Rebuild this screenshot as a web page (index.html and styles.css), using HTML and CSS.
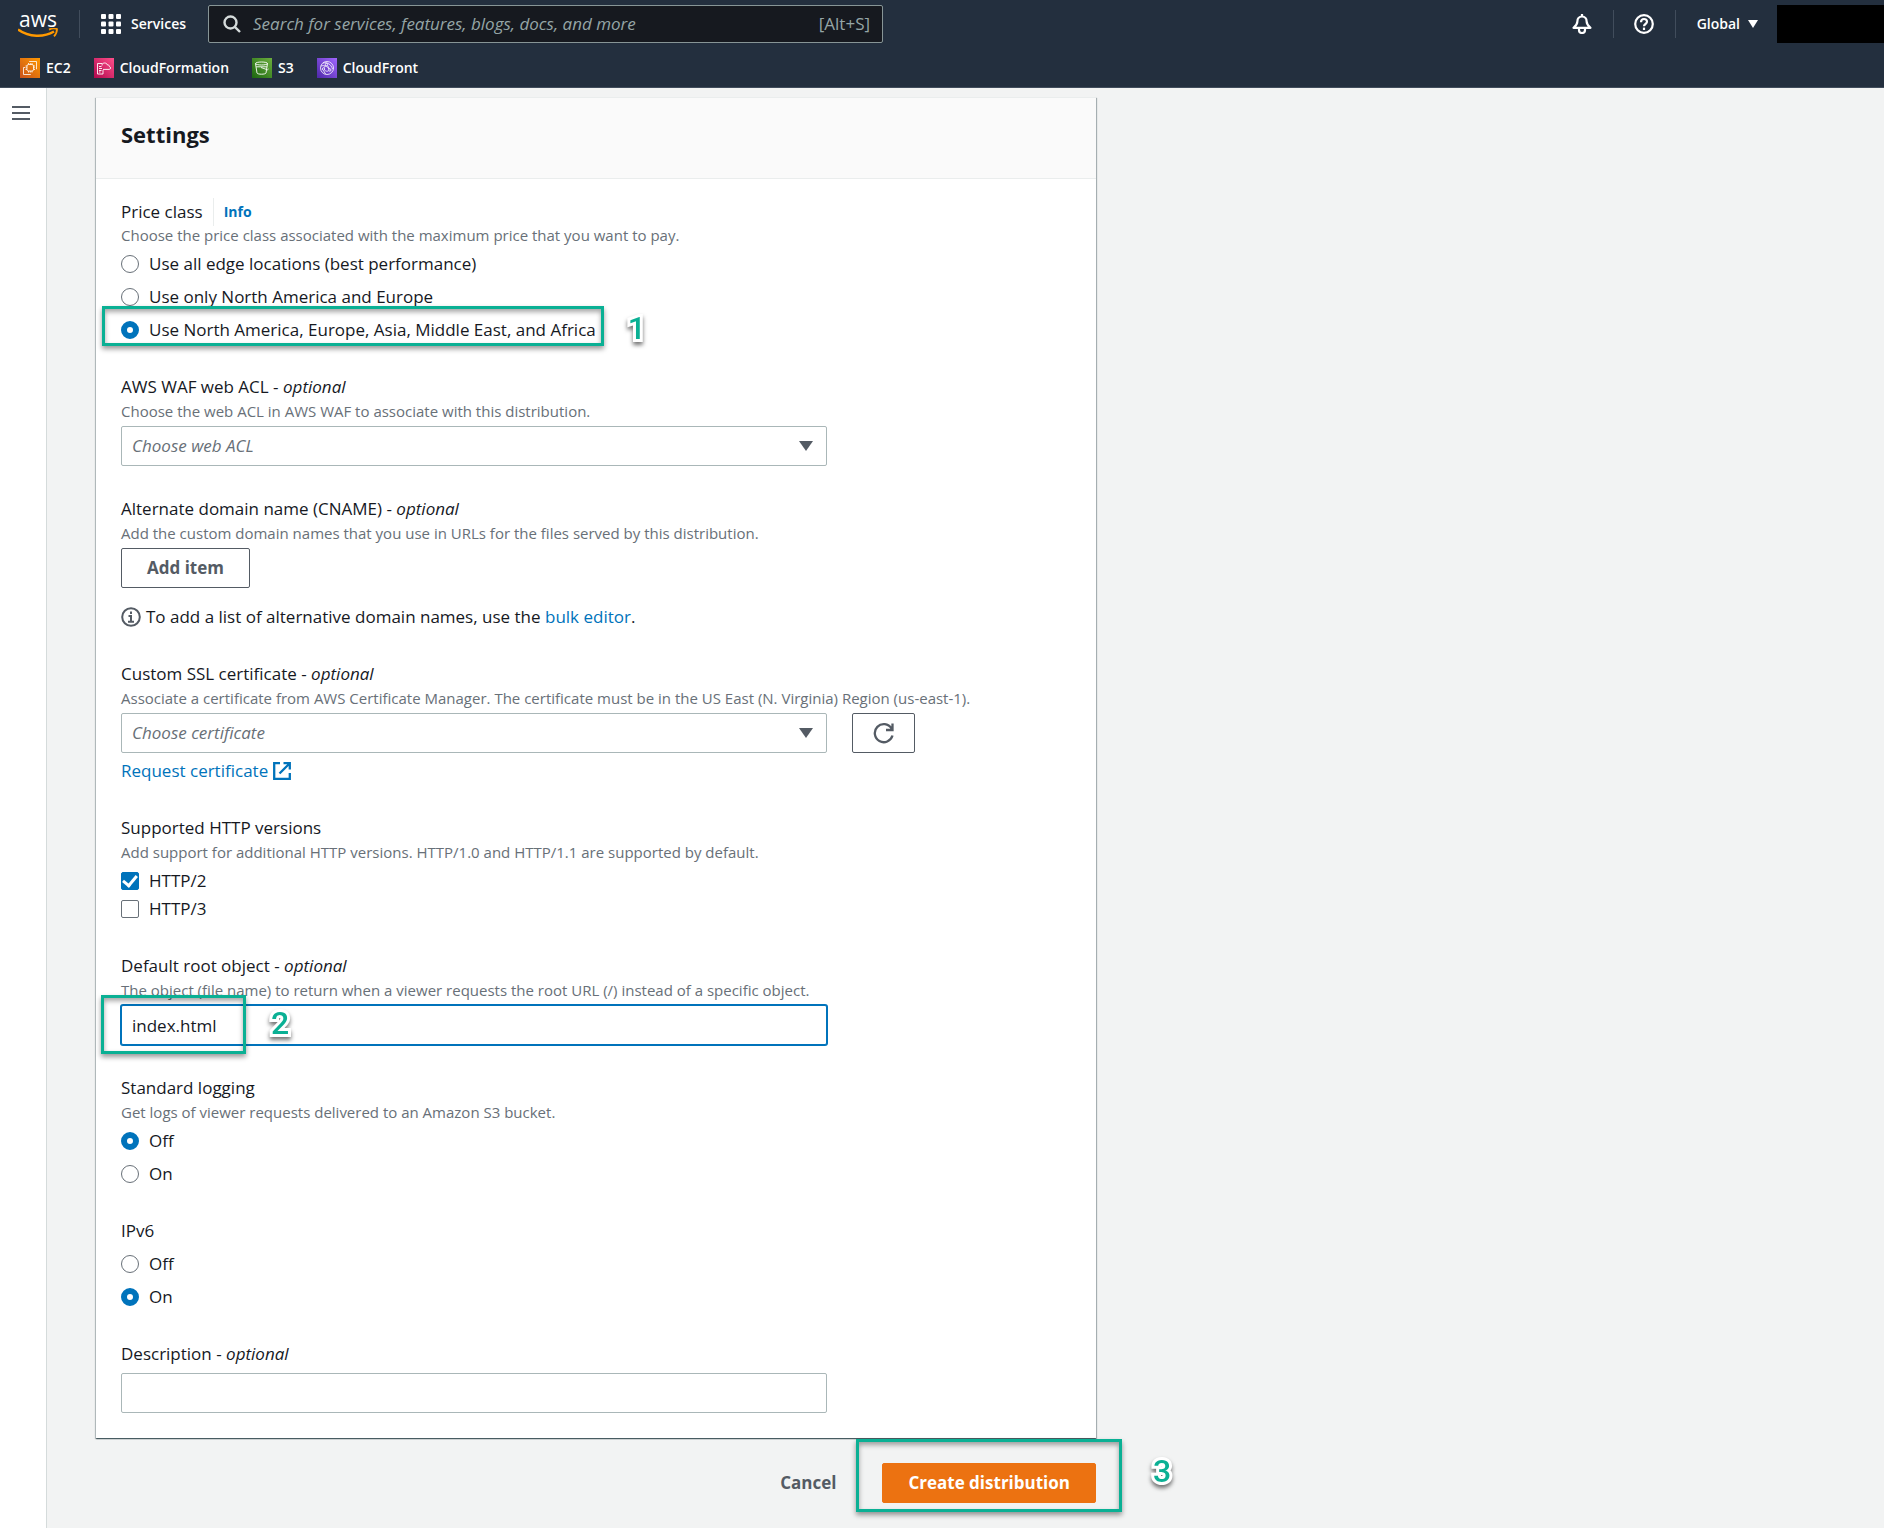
FILE: index.html
```html
<!DOCTYPE html>
<html lang="en">
<head>
<meta charset="utf-8">
<meta name="viewport" content="width=device-width, initial-scale=1">
<title>Create distribution - CloudFront</title>
<link rel="stylesheet" href="styles.css">
</head>
<body>
<header class="topbar">
  <div class="topbar-main">
    <a class="logo" href="#" aria-label="AWS home">
      <span class="logo-text">aws</span>
      <svg width="40" height="10" viewBox="0 0 40 10">
        <path d="M0 1.500C11 9.500 26 9.500 36 3.500" fill="none" stroke="#f90" stroke-width="2.400"/>
        <path d="M31 1.600c3-1.400 6-1.400 8-.6 0 3-1.200 5.500-3 7.400" fill="none" stroke="#f90" stroke-width="1.800"/>
      </svg>
    </a>
    <button class="services" type="button">
      <svg width="20" height="20" viewBox="0 0 20 20" fill="#fff">
        <rect width="5" height="5" rx="1"/><rect x="7.500" width="5" height="5" rx="1"/><rect x="15" width="5" height="5" rx="1"/>
        <rect y="7.500" width="5" height="5" rx="1"/><rect x="7.500" y="7.500" width="5" height="5" rx="1"/><rect x="15" y="7.500" width="5" height="5" rx="1"/>
        <rect y="15" width="5" height="5" rx="1"/><rect x="7.500" y="15" width="5" height="5" rx="1"/><rect x="15" y="15" width="5" height="5" rx="1"/>
      </svg>
      Services
    </button>
    <div class="search">
      <svg width="18" height="18" viewBox="0 0 18 18" fill="none" stroke="#d5dbdb" stroke-width="2.4"><circle cx="7.500" cy="7.500" r="6"/><path d="M11.800 11.800L17 17"/></svg>
      <input type="search" aria-label="Search" placeholder="Search for services, features, blogs, docs, and more">
      <span class="shortcut">[Alt+S]</span>
    </div>
    <div class="tools">
      <button class="tool" type="button" aria-label="Notifications">
        <svg width="20" height="20" viewBox="0 0 20 20" fill="none" stroke="#fff" stroke-width="2.200" stroke-linejoin="round"><path d="M10 0v3M10 2.500c-3 0-4.600 2.300-4.600 4.800 0 2.400-1.200 4.400-3.900 6.500h17c-2.700-2.100-3.900-4.100-3.900-6.500C14.600 4.800 13 2.500 10 2.500z"/><path d="M7 14.500v1.500a3 3 0 0 0 6 0v-1.500"/></svg>
      </button>
      <button class="tool" type="button" aria-label="Help">
        <svg width="20" height="20" viewBox="0 0 20 20" fill="none" stroke="#fff" stroke-width="2.200"><circle cx="10" cy="10" r="8.800"/><path d="M7 8.200C7 4 13 4 13 7.800c0 2.200-3 2.200-3 4.400"/><path d="M10 13.600v2.400"/></svg>
      </button>
      <button class="region" type="button">Global
        <svg width="10" height="8" viewBox="0 0 10 8" fill="#fff"><path d="M0 0h10L5 8z"/></svg>
      </button>
      <div class="account"></div>
    </div>
  </div>
  <nav class="favorites" aria-label="Favorites">
    <a href="#"><svg width="20" height="20" viewBox="0 0 20 20"><defs><linearGradient id="g-ec2" x1="0" y1="1" x2="1" y2="0"><stop stop-color="#c8511b"/><stop offset="1" stop-color="#f90"/></linearGradient></defs><rect width="20" height="20" fill="url(#g-ec2)"/><g fill="none" stroke="#fff" stroke-width=".8"><rect x="7" y="6.500" width="6.500" height="6.500" rx="1.500"/><path d="M8.500 5v1.500M10.300 5v1.500M12 5v1.500M8.500 13v1.500M10.300 13v1.500M12 13v1.500M5.500 8H7M5.500 9.800H7M5.500 11.500H7M13.500 8H15M13.500 9.800H15M13.500 11.500H15M9.500 4V3.500h7V11H16M5 9.500H3.500v7h7V16"/></g></svg>EC2</a>
    <a href="#"><svg width="20" height="20" viewBox="0 0 20 20"><defs><linearGradient id="g-cfn" x1="0" y1="1" x2="1" y2="0"><stop stop-color="#b0084d"/><stop offset="1" stop-color="#ff4f8b"/></linearGradient></defs><rect width="20" height="20" fill="url(#g-cfn)"/><g fill="none" stroke="#fff" stroke-width=".9"><path d="M8.500 5.500h-5v10.500h5.500v-4M5 8.500h2.500M5 10.500h3M5 12.500h2.500M5 14h1.500M8 7.500c0-3 4.500-3.500 5.500-.5 1.200-.2 1.800.4 1.800 1.400 1.800.6 1.500 2.800 0 3H9"/></g></svg>CloudFormation</a>
    <a href="#"><svg width="20" height="20" viewBox="0 0 20 20"><defs><linearGradient id="g-s3" x1="0" y1="1" x2="1" y2="0"><stop stop-color="#1b660f"/><stop offset="1" stop-color="#6cae3e"/></linearGradient></defs><rect width="20" height="20" fill="url(#g-s3)"/><g fill="none" stroke="#fff" stroke-width=".9"><ellipse cx="9.500" cy="5.500" rx="6" ry="1.500"/><path d="M3.500 5.500L5 15c.5 1.600 8.500 1.600 9 0l1.500-9.500M4.200 8.800h10.600M9 9.500l6.500 2.300 1-.8"/></g></svg>S3</a>
    <a href="#"><svg width="20" height="20" viewBox="0 0 20 20"><defs><linearGradient id="g-cf" x1="0" y1="1" x2="1" y2="0"><stop stop-color="#4d27a8"/><stop offset="1" stop-color="#a166ff"/></linearGradient></defs><rect width="20" height="20" fill="url(#g-cf)"/><g fill="none" stroke="#fff" stroke-width=".8"><circle cx="10" cy="10" r="6.500"/><circle cx="9.500" cy="6.500" r="1.200"/><circle cx="6.500" cy="11" r="1.200"/><circle cx="12.800" cy="12" r="1.200"/><path d="M6 5c4-1 8 1 9.500 6M8.600 7.500L7 9.800M7.500 12c1.500 1.500 3 1.500 4 .8M10.500 7.500l1.800 3.300M6.500 12.500L8.500 16M4 8c3-1 6 0 8 3"/></g></svg>CloudFront</a>
  </nav>
</header>

<div class="shell">
  <aside class="rail">
    <button class="menu" type="button" aria-label="Open navigation"><span></span><span></span><span></span></button>
  </aside>
  <main class="content">
    <form>
      <section class="card">
        <div class="card-head"><h2>Settings</h2></div>
        <div class="card-body">

          <div class="field" role="radiogroup" aria-labelledby="price-label">
            <div class="label-row"><span class="label" id="price-label">Price class</span><a class="info" href="#">Info</a></div>
            <p class="hint">Choose the price class associated with the maximum price that you want to pay.</p>
            <div class="options">
              <label class="option"><input type="radio" name="price">Use all edge locations (best performance)</label>
              <label class="option"><input type="radio" name="price">Use only North America and Europe</label>
              <div class="marked marked-option">
                <label class="option"><input type="radio" name="price" checked>Use North America, Europe, Asia, Middle East, and Africa</label>
                <span class="frame"></span><span class="step">1</span>
              </div>
            </div>
          </div>

          <div class="field">
            <label class="label" for="acl">AWS WAF web ACL - <i>optional</i></label>
            <p class="hint">Choose the web ACL in AWS WAF to associate with this distribution.</p>
            <div class="select"><select id="acl"><option>Choose web ACL</option></select></div>
          </div>

          <div class="field">
            <span class="label">Alternate domain name (CNAME) - <i>optional</i></span>
            <p class="hint">Add the custom domain names that you use in URLs for the files served by this distribution.</p>
            <button class="btn" type="button">Add item</button>
            <p class="note">
              <svg width="20" height="20" viewBox="0 0 20 20" fill="none" stroke="#545b64" stroke-width="2"><circle cx="10" cy="10" r="8.800"/><path d="M10 4.500v2.500M7.500 9H10v5.500M7 14.700h6"/></svg>
              <span>To add a list of alternative domain names, use the <a href="#">bulk editor</a>.</span>
            </p>
          </div>

          <div class="field">
            <label class="label" for="cert">Custom SSL certificate - <i>optional</i></label>
            <p class="hint">Associate a certificate from AWS Certificate Manager. The certificate must be in the US East (N. Virginia) Region (us-east-1).</p>
            <div class="control-row">
              <div class="select"><select id="cert"><option>Choose certificate</option></select></div>
              <button class="btn btn-icon" type="button" aria-label="Refresh certificates">
                <svg width="22" height="22" viewBox="0 0 22 22" fill="none" stroke="#545b64" stroke-width="2.300"><path d="M19.500 13.500A9 9 0 1 1 18.500 6.500M19.500 1.500v6.500H13"/></svg>
              </button>
            </div>
            <a class="external" href="#">Request certificate
              <svg width="18" height="18" viewBox="0 0 18 18" fill="none" stroke="#0073bb" stroke-width="2.300"><path d="M7 1.200H1.200v15.600h15.600V11M10.500 1.200h6.300v6.300M16.500 1.500L6.500 11.500"/></svg>
            </a>
          </div>

          <div class="field" role="group" aria-labelledby="http-label">
            <span class="label" id="http-label">Supported HTTP versions</span>
            <p class="hint">Add support for additional HTTP versions. HTTP/1.0 and HTTP/1.1 are supported by default.</p>
            <div class="checks">
              <label class="option"><input type="checkbox" checked>HTTP/2</label>
              <label class="option"><input type="checkbox">HTTP/3</label>
            </div>
          </div>

          <div class="field">
            <label class="label" for="root">Default root object - <i>optional</i></label>
            <p class="hint">The object (file name) to return when a viewer requests the root URL (/) instead of a specific object.</p>
            <div class="marked marked-input">
              <input class="text active" id="root" type="text" value="index.html">
              <span class="frame"></span><span class="step">2</span>
            </div>
          </div>

          <div class="field" role="radiogroup" aria-labelledby="log-label">
            <span class="label" id="log-label">Standard logging</span>
            <p class="hint">Get logs of viewer requests delivered to an Amazon S3 bucket.</p>
            <div class="options">
              <label class="option"><input type="radio" name="log" checked>Off</label>
              <label class="option"><input type="radio" name="log">On</label>
            </div>
          </div>

          <div class="field" role="radiogroup" aria-labelledby="ipv6-label">
            <span class="label" id="ipv6-label">IPv6</span>
            <div class="options">
              <label class="option"><input type="radio" name="ipv6">Off</label>
              <label class="option"><input type="radio" name="ipv6" checked>On</label>
            </div>
          </div>

          <div class="field">
            <label class="label" for="desc">Description - <i>optional</i></label>
            <input class="text" id="desc" type="text">
          </div>
        </div>
      </section>
      <div class="actions">
        <button class="btn btn-link" type="button">Cancel</button>
        <div class="marked marked-submit">
          <button class="btn btn-primary" type="button">Create distribution</button>
          <span class="frame"></span><span class="step">3</span>
        </div>
      </div>
    </form>
  </main>
</div>
</body>
</html>
```

FILE: styles.css
```css
* { box-sizing: border-box; }

body {
  margin: 0;
  min-height: 100vh;
  display: flex;
  flex-direction: column;
  background: #f2f3f3;
  color: #16191f;
  font-family: "Open Sans", "Noto Sans", sans-serif;
  font-size: 17px;
  line-height: 28px;
}

button, input, select { font: inherit; color: inherit; }
button { cursor: pointer; }
a { color: #0073bb; text-decoration: none; }
p, h2 { margin: 0; }
svg { display: block; flex: none; }

/* Top bar */
.topbar {
  background: #232f3e;
  border-bottom: 1px solid #414d5c;
  color: #fff;
  font-size: 14px;
  font-weight: 600;
}
.topbar-main { display: flex; align-items: center; height: 48px; padding-left: 18px; }
.logo {
  display: flex;
  flex-direction: column;
  align-items: center;
  padding-right: 21px;
  border-right: 1px solid #414d5c;
  color: #fff;
}
.logo-text { font-size: 21px; font-weight: 500; line-height: 18px; }
.services {
  display: flex;
  align-items: center;
  gap: 10px;
  margin-left: 21px;
  padding: 0;
  border: 0;
  background: none;
}
.search {
  display: flex;
  align-items: center;
  gap: 12px;
  flex: 0 1 675px;
  height: 38px;
  margin-left: 22px;
  padding: 0 12px 0 14px;
  background: #16191f;
  border: 1px solid #879596;
  border-radius: 2px;
  color: #95a5a6;
  font-size: 17px;
  font-weight: 400;
}
.search input { flex: 1; min-width: 0; padding: 0; border: 0; outline: 0; background: none; }
.search input::placeholder { color: #95a5a6; font-style: italic; opacity: 1; }
.tools { display: flex; align-items: center; margin-left: auto; }
.tool {
  display: flex;
  justify-content: center;
  width: 62px;
  height: 28px;
  padding: 4px 0;
  border: 0;
  border-right: 1px solid #414d5c;
  background: none;
}
.region {
  display: flex;
  align-items: center;
  gap: 8px;
  padding: 0 19px 0 21px;
  border: 0;
  background: none;
}
.account { width: 107px; height: 38px; background: #000; }
.favorites { display: flex; gap: 23px; height: 39px; padding: 0 20px; align-items: center; }
.favorites a { display: flex; align-items: center; gap: 6px; color: #fff; }

/* Page */
.shell { display: flex; flex: 1; }
.rail {
  flex: none;
  width: 47px;
  background: #fff;
  border-right: 1px solid #d5dbdb;
}
.menu {
  display: flex;
  flex-direction: column;
  gap: 4px;
  margin: 18px 12px;
  padding: 0;
  border: 0;
  background: none;
}
.menu span { width: 18px; height: 2px; background: #545b64; }
.content { flex: 1; min-width: 0; padding: 9px 48px 24px 49px; }
.content form { max-width: 1000px; }

.card {
  background: #fff;
  border-top: 1px solid #eaeded;
  box-shadow: 0 1px 1px rgba(0, 28, 36, .5), 1px 1px 1px rgba(0, 28, 36, .25), -1px 1px 1px rgba(0, 28, 36, .2);
}
.card-head { padding: 22px 25px 30px; background: #fafafa; border-bottom: 1px solid #eaeded; }
.card-head h2 { font-size: 22px; font-weight: 700; line-height: 28px; }
.card-body { display: flex; flex-direction: column; gap: 29px; padding: 19px 25px 25px; }

/* Fields */
.field { display: flex; flex-direction: column; align-items: flex-start; }
.label-row { display: flex; align-items: center; height: 27px; }
.info {
  margin-left: 10px;
  padding-left: 10px;
  border-left: 1px solid #eaeded;
  font-size: 14px;
  font-weight: 700;
}
.hint { color: #687078; font-size: 15px; line-height: 20px; }
.options { display: flex; flex-direction: column; align-items: flex-start; gap: 5px; margin-top: 5px; }
.checks { margin-top: 5px; }
.option { display: flex; align-items: center; gap: 10px; }
.option input {
  appearance: none;
  flex: none;
  width: 18px;
  height: 18px;
  margin: 0;
  border: 1px solid #687078;
  background: #fff;
}
.option input[type="radio"] { border-radius: 50%; }
.option input[type="radio"]:checked { border: 6px solid #0073bb; }
.option input[type="checkbox"] { border-radius: 2px; }
.option input[type="checkbox"]:checked { display: grid; place-items: center; border-color: #0073bb; background: #0073bb; }
.option input[type="checkbox"]:checked::before {
  content: "";
  width: 11px;
  height: 6px;
  margin-bottom: 4px;
  border: solid #fff;
  border-width: 0 0 3px 3px;
  rotate: -50deg;
}

.text, .select, .marked-input { width: 706px; max-width: 100%; }
.text, .select select {
  height: 40px;
  padding: 0 10px;
  border: 1px solid #aab7b8;
  border-radius: 2px;
  background: #fff;
  outline: 0;
}
.field > .text, .field > .select, .field > .btn, .control-row, .marked-input { margin-top: 5px; }
.text.active { display: block; border-color: #0073bb; box-shadow: 0 0 0 1px #0073bb; }
.select { position: relative; }
.select select { appearance: none; display: block; width: 100%; color: #687078; font-style: italic; }
.select::after {
  content: "";
  position: absolute;
  top: 15px;
  right: 14px;
  border: solid transparent;
  border-width: 10px 7px 0;
  border-top-color: #545b64;
  pointer-events: none;
}
.control-row { display: flex; gap: 25px; width: 100%; }
.external { display: flex; align-items: center; gap: 5px; margin-top: 4px; }
.note { display: flex; align-items: center; gap: 5px; margin-top: 15px; }

.btn {
  height: 40px;
  padding: 0 25px;
  border: 1px solid #545b64;
  border-radius: 2px;
  background: #fff;
  color: #545b64;
  font-weight: 700;
}
.btn-icon { display: grid; place-items: center; width: 63px; padding: 0; }
.btn-link { border-color: transparent; background: none; }
.btn-primary { border-color: #ec7211; background: #ec7211; color: #fff; }
.actions { display: flex; justify-content: flex-end; gap: 20px; padding-top: 25px; }

/* Numbered walkthrough marks, drawn over the form */
.marked { position: relative; }
.frame {
  position: absolute;
  border: 3px solid #0ab094;
  box-shadow: 0 3px 5px rgba(0, 0, 0, .4), inset 0 3px 5px rgba(0, 0, 0, .35);
  pointer-events: none;
}
.step {
  position: absolute;
  color: #0ab094;
  font: 500 32px/36px Roboto, sans-serif;
  -webkit-text-stroke: 6px #fff;
  paint-order: stroke fill;
  filter: drop-shadow(0 3px 2px rgba(0, 0, 0, .55));
}
.marked-option .frame { inset: -10px -8px -2px -19px; }
.marked-option .step { left: 100%; top: -6px; margin-left: 32px; }
.marked-input .frame { left: -20px; top: -10px; bottom: -9px; width: 145px; }
.marked-input .step { left: 150px; top: 0; }
.marked-submit .frame { inset: -24px -26px -9px; }
.marked-submit .step { left: 100%; top: -10px; margin-left: 57px; }
```
